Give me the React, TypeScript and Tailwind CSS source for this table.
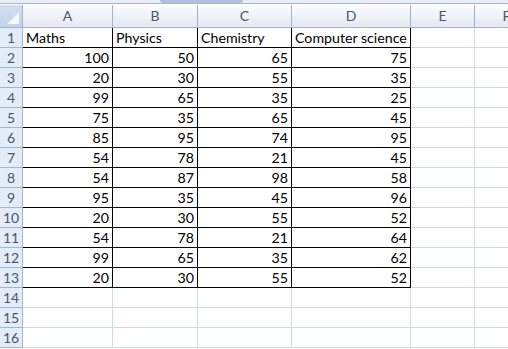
import React from "react";

const cols = [
  { name: "A", w: "w-[90px]" },
  { name: "B", w: "w-[85px]" },
  { name: "C", w: "w-[94px]" },
  { name: "D", w: "w-[119px]" },
  { name: "E", w: "w-[64px]" },
  { name: "F", w: "w-[64px]" },
];

const headers = ["Maths", "Physics", "Chemistry", "Computer science"];

const data = [
  [100, 50, 65, 75],
  [20, 30, 55, 35],
  [99, 65, 35, 25],
  [75, 35, 65, 45],
  [85, 95, 74, 95],
  [54, 78, 21, 45],
  [54, 87, 98, 58],
  [95, 35, 45, 96],
  [20, 30, 55, 52],
  [54, 78, 21, 64],
  [99, 65, 35, 62],
  [20, 30, 55, 52],
];

function Cell({
  w,
  boxed,
  right,
  children,
}: {
  w: string;
  boxed: boolean;
  right?: boolean;
  children?: React.ReactNode;
}) {
  return (
    <div
      className={`${w} h-[20px] shrink-0 border-r border-b px-[3px] leading-[20px] whitespace-nowrap ${
        boxed ? "border-black" : "border-[#d0d7e5]"
      } ${right ? "text-right" : "text-left"}`}
    >
      {children}
    </div>
  );
}

export default function App() {
  const rows = Array.from({ length: 16 }, (_, i) => i + 1);

  return (
    <div
      className="w-[508px] h-[349px] overflow-hidden bg-white text-[14.2px] text-black"
      style={{ fontFamily: "Lato, 'Open Sans', sans-serif" }}
    >
      {/* top strip with ribbon tab */}
      <div className="h-[4px] bg-[#e9eef5] border-b border-[#a7b7cc] flex">
        <div className="ml-[160px] w-[83px] h-[3px] bg-[#a9c2e4] rounded-b-[4px]" />
      </div>
      <div className="h-[1px] bg-white" />

      {/* column headers */}
      <div className="flex h-[23px]">
        <div className="w-[23px] shrink-0 border-r border-b border-[#9eb6ce] bg-gradient-to-b from-[#d3def0] to-[#c3d3ec] relative">
          <div className="absolute right-[3px] bottom-[3px] w-0 h-0 border-l-[12px] border-l-transparent border-b-[12px] border-b-[#f4f7fb]" />
        </div>
        {cols.map((c) => (
          <div
            key={c.name}
            className={`${c.w} shrink-0 border-r border-b border-[#9eb6ce] bg-gradient-to-b from-[#fbfcfd] to-[#e4e9f0] text-center leading-[22px] text-[#4a586b] text-[14px]`}
          >
            {c.name}
          </div>
        ))}
      </div>

      {/* rows */}
      {rows.map((r) => {
        const boxed = r <= 13;
        return (
          <div key={r} className="flex h-[20px]">
            <div className="w-[23px] shrink-0 h-[20px] border-r border-b border-[#9eb6ce] bg-[#e4ecf7] text-center leading-[20px] text-[#4a586b] text-[14px]">
              {r}
            </div>
            {cols.slice(0, 4).map((c, ci) => (
              <Cell key={c.name} w={c.w} boxed={boxed} right={r > 1}>
                {r === 1 ? headers[ci] : r <= 13 ? data[r - 2][ci] : null}
              </Cell>
            ))}
            <Cell w={cols[4].w} boxed={false} />
            <Cell w={cols[5].w} boxed={false} />
          </div>
        );
      })}
    </div>
  );
}
